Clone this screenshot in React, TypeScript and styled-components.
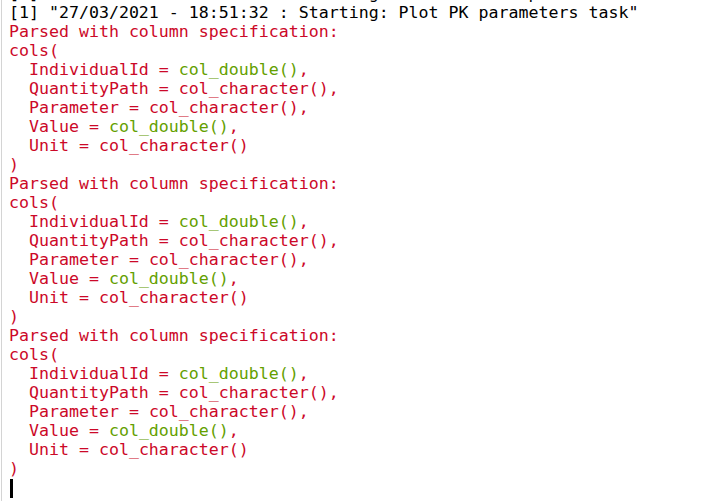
import React from "react";
import styled, { createGlobalStyle } from "styled-components";

const Global = createGlobalStyle`
  html, body { margin: 0; padding: 0; background: #ffffff; }
  body { overflow: hidden; }
`;

const Console = styled.div`
  width: 721px;
  height: 501px;
  margin-left: 1px;
  border-left: 1px solid #d4d4d4;
  box-sizing: border-box;
  padding-left: 7px;
  overflow: hidden;
  font-family: "DejaVu Sans Mono", "Liberation Mono", monospace;
  font-size: 16.6px;
  line-height: 19px;
  white-space: pre;
`;

const Lines = styled.div`
  margin-top: -16px;
  display: flex;
  flex-direction: column;
`;

const Line = styled.div<{ $tone?: "out" | "msg" }>`
  height: 19px;
  color: ${(p) => (p.$tone === "msg" ? "#cc0828" : "#000000")};
`;

const Fn = styled.span<{ $type: "double" | "character" }>`
  color: ${(p) => (p.$type === "double" ? "#64a000" : "#cc0828")};
`;

const Cursor = styled.div`
  width: 3px;
  height: 19px;
  margin-top: 1px;
  margin-left: 1px;
  background: #000;
`;

const fields: [string, "double" | "character"][] = [
  ["IndividualId", "double"],
  ["QuantityPath", "character"],
  ["Parameter", "character"],
  ["Value", "double"],
  ["Unit", "character"],
];

function Spec() {
  return (
    <>
      <Line $tone="msg">Parsed with column specification:</Line>
      <Line $tone="msg">cols(</Line>
      {fields.map(([name, type], i) => (
        <Line $tone="msg" key={name}>
          {"  " + name + " = "}
          <Fn $type={type}>{`col_${type}()`}</Fn>
          {i < fields.length - 1 ? "," : ""}
        </Line>
      ))}
      <Line $tone="msg">)</Line>
    </>
  );
}

export default function App() {
  return (
    <>
      <Global />
      <Console>
        <Lines>
          <Line>[1] "27/03/2021 - 18:51:29 : Starting: Calculate PK parameters task"</Line>
          <Line>[1] "27/03/2021 - 18:51:32 : Starting: Plot PK parameters task"</Line>
          <Spec />
          <Spec />
          <Spec />
          <Cursor />
        </Lines>
      </Console>
    </>
  );
}
